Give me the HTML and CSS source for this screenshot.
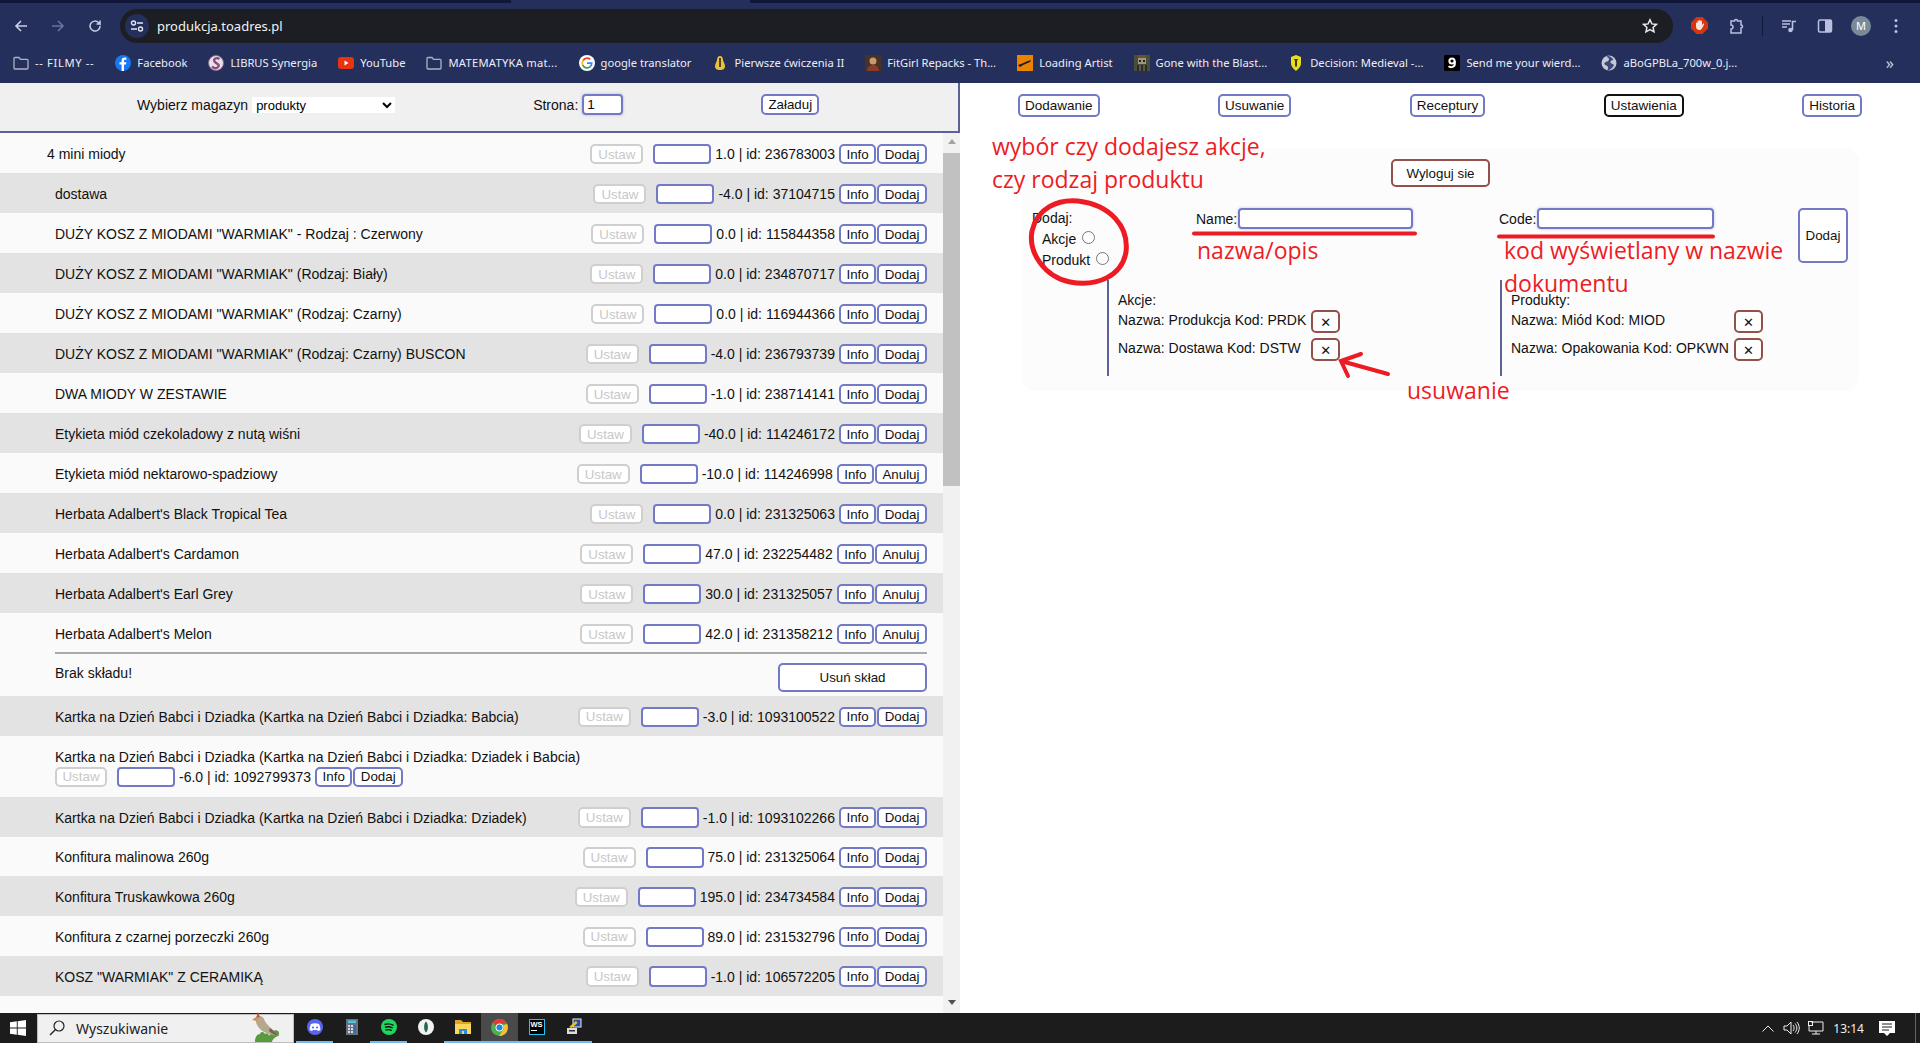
FILE: index.html
```html
<!DOCTYPE html>
<html lang="pl">
<head>
  <meta charset="UTF-8">
  <title>produkcja.toadres.pl</title>
  <link rel="stylesheet" href="styles.css">
</head>
<body>
  <div class="tabstrip"><div class="tab-piece"></div></div>

  <div class="toolbar">
    <div class="nav-icons">
      <svg width="16" height="16" viewBox="0 0 16 16"><path d="M14 8H3M8 3L3 8l5 5" fill="none" stroke="#c9cfe6" stroke-width="1.6"/></svg>
      <svg width="16" height="16" viewBox="0 0 16 16"><path d="M2 8h11M8 3l5 5-5 5" fill="none" stroke="#6b7396" stroke-width="1.6"/></svg>
      <svg width="16" height="16" viewBox="0 0 16 16"><path d="M13 8a5 5 0 1 1-1.5-3.5L13 6V2.500M13 6H9.500" fill="none" stroke="#c9cfe6" stroke-width="1.5"/></svg>
    </div>
    <div class="address">
      <span class="chip"><svg width="14" height="12" viewBox="0 0 14 12"><circle cx="3.500" cy="3" r="2" fill="none" stroke="#e4e7f2" stroke-width="1.400"/><path d="M7 3h6M1 9h6" stroke="#e4e7f2" stroke-width="1.400"/><circle cx="10.500" cy="9" r="2" fill="none" stroke="#e4e7f2" stroke-width="1.400"/></svg></span>
      <span class="url">produkcja.toadres.pl</span>
      <svg class="star" width="16" height="16" viewBox="0 0 16 16"><path d="M8 1.800l1.900 4.100 4.500.5-3.300 3 .9 4.400L8 11.600l-4 2.200.9-4.400-3.300-3 4.500-.5z" fill="none" stroke="#e4e7f2" stroke-width="1.500"/></svg>
    </div>
    <div class="ext-icons">
      <svg class="ext-stop" width="17" height="17" viewBox="0 0 17 17"><path d="M5.500 0h6L17 5.500v6L11.500 17h-6L0 11.500v-6z" fill="#d8340f"/><path d="M5 9V6a.8.8 0 0 1 1.500 0V4a.8.8 0 0 1 1.500 0v-.6a.8.8 0 0 1 1.500 0V4a.8.8 0 0 1 1.500 0v4l1-1.200c.7-.6 1.500 0 1.100.7l-2 3.700c-.6 1.100-1.400 1.800-2.900 1.800-2 0-3.200-1.300-3.200-3.500z" fill="#f6e4dc"/></svg>
      <svg class="ext-puzzle" width="16" height="18" viewBox="0 0 16 18"><path d="M3 4h3.500a1.500 1.500 0 0 1 3 0H13v4a1.500 1.500 0 0 1 0 3v5H3v-4a1.500 1.500 0 0 0 0-4z" fill="none" stroke="#b9c0e0" stroke-width="1.500"/></svg>
      <span class="divider-v"></span>
      <svg class="ext-media" width="16" height="16" viewBox="0 0 16 16"><path d="M1 3h9M1 6h8M1 9h5" stroke="#b9c0e0" stroke-width="1.400"/><path d="M11.500 12V3.500H15" fill="none" stroke="#b9c0e0" stroke-width="1.600"/><circle cx="9.500" cy="12" r="2.300" fill="#b9c0e0"/></svg>
      <svg class="ext-side" width="16" height="16" viewBox="0 0 16 16"><rect x="1.500" y="2" width="13" height="12" rx="1.500" fill="none" stroke="#b9c0e0" stroke-width="1.500"/><rect x="8" y="2" width="6.500" height="12" fill="#b9c0e0"/></svg>
      <span class="avatar">M</span>
      <svg class="ext-dots" width="4" height="16" viewBox="0 0 4 16"><circle cx="2" cy="2.500" r="1.500" fill="#b9c0e0"/><circle cx="2" cy="8" r="1.500" fill="#b9c0e0"/><circle cx="2" cy="13.500" r="1.500" fill="#b9c0e0"/></svg>
    </div>
  </div>

  <div class="bookmarks">
    <a class="bm"><svg width="16" height="16" viewBox="0 0 16 16"><path d="M1 3.500a1 1 0 0 1 1-1h4l1.500 1.800H14a1 1 0 0 1 1 1V13a1 1 0 0 1-1 1H2a1 1 0 0 1-1-1z" fill="none" stroke="#aeb2c2" stroke-width="1.300"/></svg><span class="filmy">-- FILMY --</span></a>
    <a class="bm"><svg width="16" height="16" viewBox="0 0 16 16"><circle cx="8" cy="8" r="8" fill="#1877f2"/><path d="M9 16V9.500h2l.4-2.300H9V6c0-.8.300-1.200 1.200-1.200h1.200v-2C11 2.700 10.300 2.600 9.700 2.600 7.800 2.600 6.600 3.700 6.600 5.700v1.500H4.500v2.300h2.100V16z" fill="#fff"/></svg><span>Facebook</span></a>
    <a class="bm"><svg width="16" height="16" viewBox="0 0 16 16"><circle cx="8" cy="8" r="7.500" fill="#e8e0e8" stroke="#8d6a8a"/><path d="M11.500 4C8.500 2 5 3.800 6.500 6.300S12.500 9.500 10 12 5 12.500 4 11.500" fill="none" stroke="#8d4a7e" stroke-width="2.400"/></svg><span>LIBRUS Synergia</span></a>
    <a class="bm"><svg width="16" height="16" viewBox="0 0 16 16"><rect y="2" width="16" height="12" rx="3" fill="#e8330f"/><path d="M6.500 5.500v5l4-2.500z" fill="#fff"/></svg><span>YouTube</span></a>
    <a class="bm"><svg width="16" height="16" viewBox="0 0 16 16"><path d="M1 3.500a1 1 0 0 1 1-1h4l1.500 1.800H14a1 1 0 0 1 1 1V13a1 1 0 0 1-1 1H2a1 1 0 0 1-1-1z" fill="none" stroke="#aeb2c2" stroke-width="1.300"/></svg><span class="matem">MATEMATYKA mat...</span></a>
    <a class="bm"><svg width="16" height="16" viewBox="0 0 16 16"><circle cx="8" cy="8" r="8" fill="#fff"/><path d="M8 3.200a4.800 4.800 0 0 1 3.200 1.200" fill="none" stroke="#ea4335" stroke-width="1.800"/><path d="M4.100 5.500a4.800 4.800 0 0 1 3.900-2.300" fill="none" stroke="#ea4335" stroke-width="1.800"/><path d="M3.700 10.200a4.800 4.800 0 0 1 .4-4.700" fill="none" stroke="#fbbc05" stroke-width="1.800"/><path d="M11.500 11.300A4.800 4.800 0 0 1 3.700 10.200" fill="none" stroke="#34a853" stroke-width="1.800"/><path d="M8 8.100h4.700a4.800 4.800 0 0 1-1.200 3.200" fill="none" stroke="#4285f4" stroke-width="1.800"/></svg><span>google translator</span></a>
    <a class="bm"><svg width="16" height="16" viewBox="0 0 16 16"><path d="M8 1c2 0 3 2 3 4 0 1 2 4 2 6 0 3-2 4-5 4s-5-1-5-4c0-2 2-5 2-6 0-2 1-4 3-4z" fill="#e8c23a"/><path d="M8 3v9" stroke="#5a4318" stroke-width="2"/></svg><span>Pierwsze ćwiczenia II</span></a>
    <a class="bm"><svg width="16" height="16" viewBox="0 0 16 16"><rect width="16" height="16" fill="#4a3122"/><circle cx="8" cy="6" r="3.500" fill="#c89a72"/><path d="M2 16c0-4 3-6 6-6s6 2 6 6z" fill="#8c3b2a"/></svg><span>FitGirl Repacks - Th...</span></a>
    <a class="bm"><svg width="16" height="16" viewBox="0 0 16 16"><rect width="16" height="16" fill="#e98300"/><path d="M1 10l3-1 7-3 3-1-1 2-7 3-3 2z" fill="#1a1a1a"/></svg><span>Loading Artist</span></a>
    <a class="bm"><svg width="16" height="16" viewBox="0 0 16 16"><rect width="16" height="16" fill="#4a4d3c"/><path d="M4 0h8v3H4z" fill="#7a4b2b"/><path d="M4 3h8v6H4z" fill="#9a9a80"/><path d="M5 5h2v2H5zM9 5h2v2H9z" fill="#22241a"/><path d="M3 16V10h10v6z" fill="#2c2e22"/><path d="M6 10v6M10 10v6" stroke="#85836a"/></svg><span>Gone with the Blast...</span></a>
    <a class="bm"><svg width="16" height="16" viewBox="0 0 16 16"><path d="M8 0l5 2v6c0 4-3 6-5 8-2-2-5-4-5-8V2z" fill="#e7dc1e"/><path d="M6 4h4l-1 2v5l-1 1-1-1V6z" fill="#3b3a12"/></svg><span>Decision: Medieval -...</span></a>
    <a class="bm"><svg width="16" height="16" viewBox="0 0 16 16"><rect width="16" height="16" rx="1.500" fill="#000"/><circle cx="8" cy="6" r="2.600" fill="none" stroke="#fff" stroke-width="2"/><path d="M10.800 6v3c0 3-4 4-6.300 2.300" fill="none" stroke="#fff" stroke-width="2"/></svg><span>Send me your wierd...</span></a>
    <a class="bm"><svg width="16" height="16" viewBox="0 0 16 16"><circle cx="8" cy="8" r="7.500" fill="#c4c9d8"/><path d="M5 1.500c3 1 4 3 2 4.500S3 7 3.500 9 7 10 7 12.500 6 15 7 15.500c3-1 5-3 6-5.500-1-1.500-3-1-3.500-2.500s1.500-2 3-3c-1-1.500-3-3-5-3.500z" fill="#3d4a78"/></svg><span>aBoGPBLa_700w_0.j...</span></a>
    <span class="more">»</span>
  </div>

  <div class="page">
    <div class="left">
      <div class="magazyn">
        <div class="field"><span>Wybierz magazyn</span><select class="mag-select"><option>produkty</option></select></div>
        <div class="field"><span>Strona:</span><input class="page-input" value="1"></div>
        <button class="btn load-btn">Załaduj</button>
      </div>
      <div class="list-wrap">
        <div class="rows">
          <div class="row first"><span>4 mini miody</span><div class="ctrls"><button class="btn off">Ustaw</button><input class="qty"><span class="meta">1.0 | id: 236783003</span><button class="btn">Info</button><button class="btn">Dodaj</button></div></div>
          <div class="row dark"><span>dostawa</span><div class="ctrls"><button class="btn off">Ustaw</button><input class="qty"><span class="meta">-4.0 | id: 37104715</span><button class="btn">Info</button><button class="btn">Dodaj</button></div></div>
          <div class="row"><span>DUŻY KOSZ Z MIODAMI "WARMIAK" - Rodzaj : Czerwony</span><div class="ctrls"><button class="btn off">Ustaw</button><input class="qty"><span class="meta">0.0 | id: 115844358</span><button class="btn">Info</button><button class="btn">Dodaj</button></div></div>
          <div class="row dark"><span>DUŻY KOSZ Z MIODAMI "WARMIAK" (Rodzaj: Biały)</span><div class="ctrls"><button class="btn off">Ustaw</button><input class="qty"><span class="meta">0.0 | id: 234870717</span><button class="btn">Info</button><button class="btn">Dodaj</button></div></div>
          <div class="row"><span>DUŻY KOSZ Z MIODAMI "WARMIAK" (Rodzaj: Czarny)</span><div class="ctrls"><button class="btn off">Ustaw</button><input class="qty"><span class="meta">0.0 | id: 116944366</span><button class="btn">Info</button><button class="btn">Dodaj</button></div></div>
          <div class="row dark"><span>DUŻY KOSZ Z MIODAMI "WARMIAK" (Rodzaj: Czarny) BUSCON</span><div class="ctrls"><button class="btn off">Ustaw</button><input class="qty"><span class="meta">-4.0 | id: 236793739</span><button class="btn">Info</button><button class="btn">Dodaj</button></div></div>
          <div class="row"><span>DWA MIODY W ZESTAWIE</span><div class="ctrls"><button class="btn off">Ustaw</button><input class="qty"><span class="meta">-1.0 | id: 238714141</span><button class="btn">Info</button><button class="btn">Dodaj</button></div></div>
          <div class="row dark"><span>Etykieta miód czekoladowy z nutą wiśni</span><div class="ctrls"><button class="btn off">Ustaw</button><input class="qty"><span class="meta">-40.0 | id: 114246172</span><button class="btn">Info</button><button class="btn">Dodaj</button></div></div>
          <div class="row"><span>Etykieta miód nektarowo-spadziowy</span><div class="ctrls"><button class="btn off">Ustaw</button><input class="qty"><span class="meta">-10.0 | id: 114246998</span><button class="btn">Info</button><button class="btn">Anuluj</button></div></div>
          <div class="row dark"><span>Herbata Adalbert's Black Tropical Tea</span><div class="ctrls"><button class="btn off">Ustaw</button><input class="qty"><span class="meta">0.0 | id: 231325063</span><button class="btn">Info</button><button class="btn">Dodaj</button></div></div>
          <div class="row"><span>Herbata Adalbert's Cardamon</span><div class="ctrls"><button class="btn off">Ustaw</button><input class="qty"><span class="meta">47.0 | id: 232254482</span><button class="btn">Info</button><button class="btn">Anuluj</button></div></div>
          <div class="row dark"><span>Herbata Adalbert's Earl Grey</span><div class="ctrls"><button class="btn off">Ustaw</button><input class="qty"><span class="meta">30.0 | id: 231325057</span><button class="btn">Info</button><button class="btn">Anuluj</button></div></div>
          <div class="row"><span>Herbata Adalbert's Melon</span><div class="ctrls"><button class="btn off">Ustaw</button><input class="qty"><span class="meta">42.0 | id: 231358212</span><button class="btn">Info</button><button class="btn">Anuluj</button></div></div>
          <div class="sep"><hr class="sep-line"></div>
          <div class="row empty"><span>Brak składu!</span><button class="btn wide">Usuń skład</button></div>
          <div class="row dark"><span>Kartka na Dzień Babci i Dziadka (Kartka na Dzień Babci i Dziadka: Babcia)</span><div class="ctrls"><button class="btn off">Ustaw</button><input class="qty"><span class="meta">-3.0 | id: 1093100522</span><button class="btn">Info</button><button class="btn">Dodaj</button></div></div>
          <div class="row tall"><span class="tall-name">Kartka na Dzień Babci i Dziadka (Kartka na Dzień Babci i Dziadka: Dziadek i Babcia)</span><div class="ctrls"><button class="btn off">Ustaw</button><input class="qty"><span class="meta">-6.0 | id: 1092799373</span><button class="btn">Info</button><button class="btn">Dodaj</button></div></div>
          <div class="row dark"><span>Kartka na Dzień Babci i Dziadka (Kartka na Dzień Babci i Dziadka: Dziadek)</span><div class="ctrls"><button class="btn off">Ustaw</button><input class="qty"><span class="meta">-1.0 | id: 1093102266</span><button class="btn">Info</button><button class="btn">Dodaj</button></div></div>
          <div class="row"><span>Konfitura malinowa 260g</span><div class="ctrls"><button class="btn off">Ustaw</button><input class="qty"><span class="meta">75.0 | id: 231325064</span><button class="btn">Info</button><button class="btn">Dodaj</button></div></div>
          <div class="row dark"><span>Konfitura Truskawkowa 260g</span><div class="ctrls"><button class="btn off">Ustaw</button><input class="qty"><span class="meta">195.0 | id: 234734584</span><button class="btn">Info</button><button class="btn">Dodaj</button></div></div>
          <div class="row"><span>Konfitura z czarnej porzeczki 260g</span><div class="ctrls"><button class="btn off">Ustaw</button><input class="qty"><span class="meta">89.0 | id: 231532796</span><button class="btn">Info</button><button class="btn">Dodaj</button></div></div>
          <div class="row dark"><span>KOSZ "WARMIAK" Z CERAMIKĄ</span><div class="ctrls"><button class="btn off">Ustaw</button><input class="qty"><span class="meta">-1.0 | id: 106572205</span><button class="btn">Info</button><button class="btn">Dodaj</button></div></div>
          <div class="row"></div>
        </div>
        <div class="scrollbar">
          <span class="sb-arrow up"></span>
          <span class="sb-thumb"></span>
          <span class="sb-arrow down"></span>
        </div>
      </div>
    </div>

    <div class="right">
      <div class="tabs">
        <button class="btn tab">Dodawanie</button>
        <button class="btn tab">Usuwanie</button>
        <button class="btn tab">Receptury</button>
        <button class="btn tab active">Ustawienia</button>
        <button class="btn tab">Historia</button>
      </div>
      <div class="card">
        <div class="card-top"><button class="btn brown logout">Wyloguj sie</button></div>
        <div class="add-form">
          <div class="col-type">
            <div>Dodaj:</div>
            <label class="radio-line">Akcje <input type="radio" name="typ"></label>
            <label class="radio-line">Produkt <input type="radio" name="typ"></label>
          </div>
          <div class="col-name"><span>Name:</span><input class="text-input name-input"></div>
          <div class="col-code"><span>Code:</span><input class="text-input code-input"></div>
          <button class="btn add-btn">Dodaj</button>
        </div>
        <div class="lists">
          <div class="list akcje">
            <div class="list-title">Akcje:</div>
            <div class="list-rows">
              <span>Nazwa: Produkcja Kod: PRDK</span><button class="btn brown del">✕</button>
              <span>Nazwa: Dostawa Kod: DSTW</span><button class="btn brown del">✕</button>
            </div>
          </div>
          <div class="list produkty">
            <div class="list-title">Produkty:</div>
            <div class="list-rows">
              <span>Nazwa: Miód Kod: MIOD</span><button class="btn brown del">✕</button>
              <span>Nazwa: Opakowania Kod: OPKWN</span><button class="btn brown del">✕</button>
            </div>
          </div>
        </div>
      </div>

      <!-- czerwone dopiski na screenie -->
      <div class="note note-wybor">wybór czy dodajesz akcje,<br>czy rodzaj produktu</div>
      <div class="note note-nazwa">nazwa/opis</div>
      <div class="note note-kod">kod wyświetlany w nazwie</div>
      <div class="note note-dok">dokumentu</div>
      <div class="note note-usun">usuwanie</div>
      <svg class="scribble" width="960" height="320" viewBox="960 83 960 320">
        <path d="M1078 201c-20-2-41 7-46 30-4 22 13 46 38 51 27 5 52-6 56-30 3-25-15-47-48-51" fill="none" stroke="#ed1c24" stroke-width="5"/>
        <path d="M1194 233.500h221" stroke="#ed1c24" stroke-width="4" stroke-linecap="round"/>
        <path d="M1499 236.500h214" stroke="#ed1c24" stroke-width="4" stroke-linecap="round"/>
        <path d="M1388 374l-47-13M1361 354l-20 7 7 15" fill="none" stroke="#ed1c24" stroke-width="4" stroke-linecap="round"/>
      </svg>
    </div>
  </div>

  <div class="taskbar">
    <svg class="start" width="16" height="16" viewBox="0 0 16 16"><path d="M0 2.300L6.800 1.300V7.600H0zM7.700 1.200L16 0V7.600H7.700zM0 8.400H6.800V14.700L0 13.700zM7.700 8.400H16V16L7.700 14.800z" fill="#fff"/></svg>
    <div class="search">
      <svg width="16" height="16" viewBox="0 0 16 16"><circle cx="10" cy="6" r="5" fill="none" stroke="#222" stroke-width="1.200"/><path d="M6.300 9.700L1 15" stroke="#222" stroke-width="1.400"/></svg>
      <span class="search-text">Wyszukiwanie</span>
      <svg class="bird" width="36" height="30" viewBox="0 0 36 30"><path d="M5 30c0-5 2-8 5-8 1-3 4-2 5 0 2-2 4 0 4 2 2-4 6-7 9-5 2 2 1 5-2 6-2 1-4 3-4 5z" fill="#5a9a3e"/><path d="M6 6c3-3 7-2 8 1 2 6 9 10 15 17-7-1-15-3-19-7C7 14 5 10 6 6z" fill="#b5a88e"/><path d="M20 16c3 2 6 5 9 8-4-1-7-2-10-5z" fill="#7c5f55"/><path d="M8 0l2 5-4 1z" fill="#c65a3a"/><path d="M2 8l4-3 1 4z" fill="#e08a3a"/></svg>
    </div>
    <div class="apps">
      <span class="app on"><svg width="16" height="16" viewBox="0 0 16 16"><circle cx="8" cy="8" r="8" fill="#5865f2"/><path d="M4 5c2.500-1 5.500-1 8 0 1 2 1.500 4 1.300 6-1 .6-1.800 1-2.500 1l-.6-1H5.800l-.6 1c-.7 0-1.500-.4-2.500-1C2.500 9 3 7 4 5z" fill="#fff"/><circle cx="6" cy="8.500" r="1.100" fill="#5865f2"/><circle cx="10" cy="8.500" r="1.100" fill="#5865f2"/></svg></span>
      <span class="app"><svg width="12" height="16" viewBox="0 0 12 16"><rect width="12" height="16" fill="#69727c"/><rect x="2" y="1.500" width="8" height="2.500" fill="#4fc3e8"/><path d="M2 6h2v2H2zM5 6h2v2H5zM2 9h2v2H2zM5 9h2v2H5zM2 12h2v2H2zM5 12h2v2H5z" fill="#d7dade"/><rect x="8" y="6" width="2" height="8" fill="#2a6fb0"/></svg></span>
      <span class="app on"><svg width="16" height="16" viewBox="0 0 16 16"><circle cx="8" cy="8" r="8" fill="#1ed760"/><path d="M3.500 5.500c3-1 6.500-.7 9 .8M4 8.300c2.500-.8 5.500-.5 7.700.7M4.500 11c2-.6 4.500-.4 6.300.6" fill="none" stroke="#111" stroke-width="1.400"/></svg></span>
      <span class="app"><svg width="16" height="16" viewBox="0 0 16 16"><circle cx="8" cy="8" r="8" fill="#f2f2f2"/><path d="M8 2.500c2.500 2 2.500 9 0 11-2.500-2-2.500-9 0-11z" fill="#1d6b4a"/></svg></span>
      <span class="app on"><svg width="16" height="16" viewBox="0 0 16 16"><path d="M0 1h6l2 2h8v12H0z" fill="#e0a51e"/><rect y="5" width="16" height="10" fill="#f9d75e"/><rect x="4" y="10" width="8" height="5" fill="#2a8fd8"/><rect x="7" y="12" width="2" height="3" fill="#f9d75e"/></svg></span>
      <span class="app on current"><svg width="17" height="17" viewBox="0 0 17 17"><circle cx="8.500" cy="8.500" r="8.500" fill="#4caf50"/><path d="M8.500 0A8.500 8.500 0 0 1 16 4.800H8.500a3.800 3.800 0 0 0-3.500 2L1.500 3.600A8.500 8.500 0 0 1 8.500 0z" fill="#e53935"/><path d="M16 4.800A8.500 8.500 0 0 1 8 17l3.500-5.300a3.800 3.800 0 0 0 .4-5z" fill="#fbc02d"/><circle cx="8.500" cy="8.500" r="3.600" fill="#1e88e5" stroke="#fff" stroke-width="1"/></svg></span>
      <span class="app on"><span class="ws">WS</span></span>
      <span class="app on"><svg width="16" height="18" viewBox="0 0 16 18"><rect x="1" y="10" width="10" height="6" fill="#ddd"/><rect x="3" y="12" width="6" height="1.500" fill="#333"/><rect x="7" y="1" width="8" height="8" fill="#2b4aa8" stroke="#eee"/><path d="M3 9l7-6 1.500 2-6 5z" fill="#e8c81e"/></svg></span>
    </div>
    <div class="tray">
      <svg class="t-up" width="12" height="7" viewBox="0 0 12 7"><path d="M0.500 6.500L6 1l5.500 5.500" fill="none" stroke="#eee" stroke-width="1"/></svg>
      <svg class="t-vol" width="17" height="14" viewBox="0 0 17 14"><path d="M1 5h3l4-4v12l-4-4H1zM10 4c1.500 2 1.500 4 0 6M12 2.500c2.500 3 2.500 6 0 9M14 1c3 4 3 8 0 12" fill="none" stroke="#eee" stroke-width="1"/></svg>
      <svg class="t-net" width="16" height="14" viewBox="0 0 16 14"><path d="M3 1h12v9H1V5M8 10v3M4 13h8" fill="none" stroke="#eee" stroke-width="1"/><rect x="0.500" y="0.500" width="4" height="4" fill="none" stroke="#eee"/></svg>
      <span class="clock">13:14</span>
      <svg class="t-note" width="16" height="15" viewBox="0 0 16 15"><path d="M0 0h16v12h-5l-3 3-3-3H0z" fill="#fff"/><path d="M3 3h10M3 6h10M3 9h7" stroke="#1c1c1c"/></svg>
      <span class="t-edge"></span>
    </div>
  </div>
</body>
</html>
```

FILE: styles.css
```css
* {
  box-sizing: border-box;
}
html, body {
  height: 100%;
}
body {
  margin: 0;
  height: 1043px;
  overflow: hidden;
  display: flex;
  flex-direction: column;
  font-family: "Liberation Sans", Arial, sans-serif;
  font-size: 14px;
  color: #111;
  background: #fff;
}

/* browser chrome */
.tabstrip {
  height: 3px;
  background: #10163a;
  padding-left: 511px;
}
.tab-piece {
  width: 239px;
  height: 3px;
  background: #252f5c;
}
.toolbar {
  height: 45px;
  background: #252f5c;
  display: flex;
  align-items: center;
}
.nav-icons {
  width: 120px;
  padding-left: 13px;
  display: flex;
  gap: 21px;
}
.address {
  width: 1553px;
  height: 34px;
  border-radius: 17px;
  background: #1c1e23;
  display: flex;
  align-items: center;
  padding: 0 15px 0 5px;
}
.chip {
  width: 24px;
  height: 24px;
  border-radius: 50%;
  background: #252f5c;
  display: flex;
  align-items: center;
  justify-content: center;
}
.url {
  margin-left: 8px;
  color: #f1f2f6;
  font: 13px "Noto Sans", sans-serif;
}
.star {
  margin-left: auto;
}
.ext-icons {
  flex: 1;
  display: flex;
  align-items: center;
  padding-left: 18px;
}
.ext-puzzle {
  margin-left: 20px;
}
.divider-v {
  width: 1px;
  height: 20px;
  background: #12183c;
  margin-left: 18px;
}
.ext-media {
  margin-left: 18px;
}
.ext-side {
  margin-left: 20px;
}
.avatar {
  width: 20px;
  height: 20px;
  border-radius: 50%;
  background: #7b8a99;
  color: #fff;
  font: 11px "Noto Sans", sans-serif;
  display: flex;
  align-items: center;
  justify-content: center;
  margin-left: 18px;
}
.ext-dots {
  margin-left: 23px;
}
.bookmarks {
  height: 35px;
  background: #252f5c;
  display: flex;
  align-items: center;
  padding: 0 0 6px 13px;
  gap: 21px;
  color: #eceef6;
  font: 11.2px "Noto Sans", sans-serif;
  white-space: nowrap;
}
.bm {
  display: flex;
  align-items: center;
  gap: 6px;
}
.filmy {
  letter-spacing: 0.65px;
}
.matem {
  letter-spacing: 0.25px;
}
.more {
  margin-left: auto;
  padding-right: 26px;
  font-size: 16px;
  color: #c9cfe6;
}

/* page */
.page {
  height: 930px;
  display: flex;
  position: relative;
}
.left {
  width: 960px;
  display: flex;
  flex-direction: column;
}
.magazyn {
  height: 50px;
  padding: 11px 0 0 137px;
  background: #f0f0f0;
  border-bottom: 2px solid #5c6199;
  border-right: 2px solid #5c6199;
  display: flex;
  align-items: flex-start;
  gap: 138px;
}
.field {
  display: flex;
  align-items: center;
  gap: 4px;
  height: 21px;
}
.mag-select {
  width: 143px;
  height: 16px;
  border: none;
  background: #fff;
  font: 13px "Liberation Sans", Arial, sans-serif;
  padding: 0;
}
.page-input {
  width: 41px;
  height: 21px;
  border: 2px solid #7279c7;
  border-radius: 4px;
  padding: 0 3px;
  font: 13.5px "Liberation Sans", Arial, sans-serif;
  box-shadow: 0 0 3px rgba(114, 121, 199, 0.5);
}
.btn {
  height: 20.5px;
  padding: 0 5.5px;
  background: #fff;
  border: 2px solid #7279c7;
  border-radius: 5px;
  color: #111;
  font: 13.33px "Liberation Sans", Arial, sans-serif;
}
.load-btn {
  height: 21px;
  width: 58px;
  padding: 0;
}
.list-wrap {
  flex: 1;
  min-height: 0;
  display: flex;
}
.rows {
  width: 943px;
  overflow: hidden;
}
.row {
  height: 40px;
  padding: 2px 16px 0 55px;
  background: #fafafa;
  display: flex;
  align-items: center;
  justify-content: space-between;
}
.row.first {
  padding-left: 47px;
}
.row.dark {
  background: #e3e3e3;
}
.empty ~ .row {
  height: 39.75px;
}
.row.empty {
  height: 42px;
  padding-top: 5px;
}
.row.empty span {
  margin-bottom: 9px;
}
.row.tall {
  height: 61px;
  display: block;
  padding-top: 13px;
}
.tall-name {
  display: block;
  height: 18px;
}
.tall .ctrls {
  height: 20px;
}
.tall .off {
  width: 52px;
}
.ctrls {
  display: flex;
  align-items: center;
}
.off {
  width: 53px;
  padding: 0;
  border-color: #cfcfcf;
  color: #c8c8c8;
  margin-right: 10px;
}
.qty {
  width: 58px;
  height: 20.5px;
  background: #fff;
  border: 2px solid #7279c7;
  border-radius: 4px;
  margin-right: 4px;
}
.meta {
  margin-right: 4px;
}
.ctrls .btn + .btn {
  margin-left: 1px;
}
.sep {
  height: 2px;
  margin-top: -1px;
  padding: 0 16px 0 55px;
  background: #fafafa;
}
.sep-line {
  margin: 0;
  height: 2px;
  border: none;
  background: #aaa;
}
.wide {
  width: 149px;
  height: 29px;
  padding: 0;
}
.scrollbar {
  flex: 1;
  background: #f1f1f1;
  display: flex;
  flex-direction: column;
  align-items: center;
  padding-top: 6px;
}
.sb-arrow {
  width: 0;
  height: 0;
  border-left: 4px solid transparent;
  border-right: 4px solid transparent;
}
.sb-arrow.up {
  border-bottom: 5px solid #a3a3a3;
}
.sb-arrow.down {
  border-top: 5px solid #505050;
  margin-top: auto;
  margin-bottom: 8px;
}
.sb-thumb {
  width: 100%;
  height: 333px;
  margin-top: 9px;
  background: #c1c1c1;
}

/* right side */
.right {
  flex: 1;
  position: relative;
}
.tabs {
  display: flex;
  justify-content: space-between;
  padding: 11px 58px 0;
}
.tab {
  height: 23px;
  padding: 0 5px;
  font-size: 13.5px;
}
.tab.active {
  border-color: #111;
}
.card {
  margin: 31px 0 0 62px;
  width: 837px;
  height: 243px;
  background: #fcfcfd;
  border-radius: 14px;
}
.card-top {
  padding-top: 11px;
  text-align: center;
}
.brown {
  border-color: #94504a;
}
.logout {
  width: 99px;
  height: 28px;
  padding: 0;
}
.add-form {
  margin-top: 21px;
  height: 55px;
  display: flex;
  align-items: flex-start;
  padding-left: 10px;
}
.col-type {
  width: 164px;
  line-height: 21px;
}
.radio-line {
  display: block;
  padding-left: 10px;
}
.radio-line input {
  margin: 0 0 5px 2px;
  vertical-align: middle;
}
.col-name {
  width: 303px;
  display: flex;
  align-items: center;
  gap: 1px;
}
.col-code {
  width: 299px;
  display: flex;
  align-items: center;
  gap: 1px;
}
.text-input {
  height: 21px;
  background: #fff;
  border: 2px solid #7279c7;
  border-radius: 4px;
  box-shadow: 0 0 3px rgba(114, 121, 199, 0.45);
}
.name-input {
  width: 175px;
}
.code-input {
  width: 177px;
}
.add-btn {
  width: 50px;
  height: 55px;
  padding: 0;
}
.lists {
  margin-top: 17px;
  display: flex;
  padding-left: 85px;
}
.list {
  height: 96px;
  border-left: 2px solid #5c6199;
  padding: 10px 0 0 9px;
}
.akcje {
  width: 393px;
}
.list-title {
  height: 20px;
  line-height: 20px;
}
.list-rows {
  display: grid;
  grid-template-columns: max-content max-content;
  gap: 5px;
}
.list-rows span {
  line-height: 20px;
}
.del {
  width: 29px;
  height: 23px;
  padding: 2px 0 0;
  font: 13px "DejaVu Sans", sans-serif;
}

/* red notes from the screenshot */
.note {
  position: absolute;
  color: #ed1c24;
  font: 23px/33px "Open Sans", sans-serif;
  white-space: nowrap;
}
.note-wybor {
  left: 32px;
  top: 47px;
}
.note-nazwa {
  left: 237px;
  top: 151px;
}
.note-kod {
  left: 544px;
  top: 151px;
}
.note-dok {
  left: 544px;
  top: 184px;
}
.note-usun {
  left: 447px;
  top: 291px;
}
.scribble {
  position: absolute;
  left: 0;
  top: 0;
  pointer-events: none;
}

/* windows taskbar */
.taskbar {
  height: 30px;
  background: #1c1c1c;
  display: flex;
  align-items: center;
  position: relative;
}
.start {
  margin-left: 10px;
}
.search {
  margin-left: 11px;
  width: 257px;
  height: 29px;
  background: #f0f0f0;
  border: 1px solid #bdbdbd;
  display: flex;
  align-items: center;
  padding-left: 11px;
  font: 14px "Noto Sans", sans-serif;
  color: #222;
  position: relative;
}
.search-text {
  margin-left: 11px;
}
.bird {
  position: absolute;
  right: 7px;
  bottom: 0;
}
.apps {
  margin-left: 2px;
  display: flex;
  height: 30px;
}
.app {
  width: 37px;
  height: 30px;
  display: flex;
  align-items: center;
  justify-content: center;
  border-bottom: 2px solid transparent;
}
.app.on {
  border-bottom-color: #76b9ed;
  background-clip: padding-box;
}
.app.current {
  background-color: #4a4a4a;
}
.ws {
  width: 16px;
  height: 16px;
  background: #000;
  border: 1px solid #22c4f0;
  color: #fff;
  font: bold 7.5px/8px "Liberation Sans", Arial, sans-serif;
  padding: 1px;
}
.ws::after {
  content: "";
  display: block;
  width: 6px;
  height: 1px;
  margin-top: 1px;
  background: #fff;
}
.tray {
  margin-left: auto;
  display: flex;
  align-items: center;
  color: #eee;
  font: 12px "Noto Sans", sans-serif;
  height: 30px;
}
.t-vol {
  margin-left: 9px;
}
.t-net {
  margin-left: 8px;
}
.clock {
  margin-left: 9px;
}
.t-note {
  margin-left: 15px;
}
.t-edge {
  width: 1px;
  height: 30px;
  background: #666;
  margin: 0 4px 0 20px;
}
```
